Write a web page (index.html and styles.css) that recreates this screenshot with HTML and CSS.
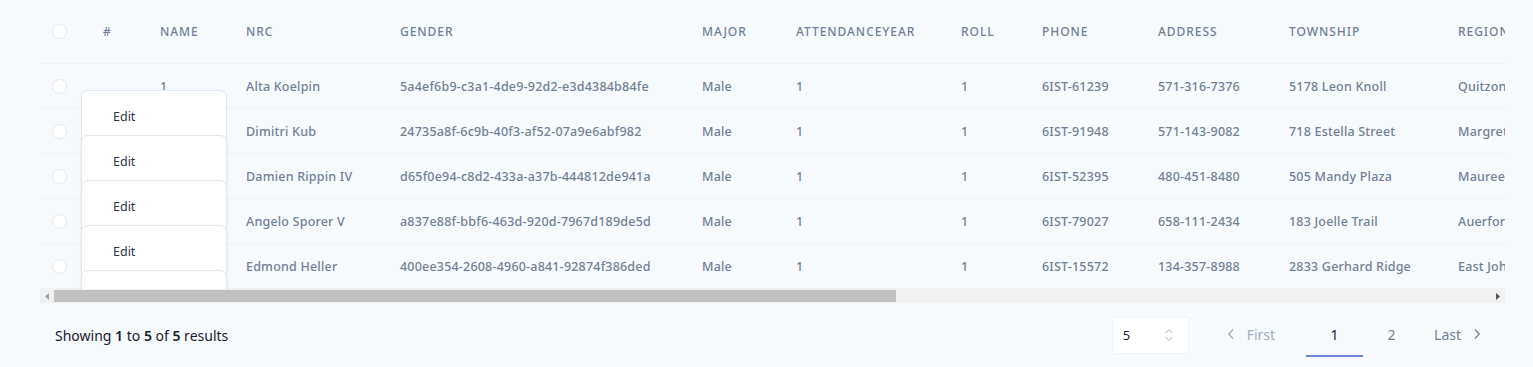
FILE: index.html
```html
<!DOCTYPE html>
<html lang="en">

<head>
    <meta charset="UTF-8">
    <meta name="viewport" content="width=device-width, initial-scale=1.0">
    <title>Students</title>
    <link rel="stylesheet" href="styles.css">
</head>

<body>
    <div class="table-wrap">
        <table class="grid">
            <colgroup>
                <col style="width:51px">
                <col style="width:57px">
                <col style="width:86px">
                <col style="width:154px">
                <col style="width:302px">
                <col style="width:94px">
                <col style="width:165px">
                <col style="width:81px">
                <col style="width:116px">
                <col style="width:131px">
                <col style="width:169px">
                <col style="width:190px">
                <col style="width:180px">
                <col style="width:180px">
                <col style="width:180px">
                <col style="width:180px">
                <col style="width:184px">
            </colgroup>
            <thead>
                <tr>
                    <th><span class="check"></span></th>
                    <th>#</th>
                    <th>Name</th>
                    <th>Nrc</th>
                    <th>Gender</th>
                    <th>Major</th>
                    <th>AttendanceYear</th>
                    <th>Roll</th>
                    <th>Phone</th>
                    <th>Address</th>
                    <th>Township</th>
                    <th>Region</th>
                    <th>Father</th>
                    <th>Mother</th>
                    <th>Email</th>
                    <th>Created</th>
                    <th></th>
                </tr>
            </thead>
            <tbody>
                <tr>
                    <td><span class="check"></span></td>
                    <td class="actions">
                        <div class="menu"><a>Edit</a><a>Delete</a></div>
                    </td>
                    <td>1</td>
                    <td>Alta Koelpin</td>
                    <td>5a4ef6b9-c3a1-4de9-92d2-e3d4384b84fe</td>
                    <td>Male</td>
                    <td>1</td>
                    <td>1</td>
                    <td>6IST-61239</td>
                    <td>571-316-7376</td>
                    <td>5178 Leon Knoll</td>
                    <td>Quitzon Mountains</td>
                    <td>Mr. Koelpin</td>
                    <td>Mrs. Koelpin</td>
                    <td>alta@example.com</td>
                    <td>2021-03-01</td>
                    <td></td>
                </tr>
                <tr>
                    <td><span class="check"></span></td>
                    <td class="actions">
                        <div class="menu"><a>Edit</a><a>Delete</a></div>
                    </td>
                    <td>2</td>
                    <td>Dimitri Kub</td>
                    <td>24735a8f-6c9b-40f3-af52-07a9e6abf982</td>
                    <td>Male</td>
                    <td>1</td>
                    <td>1</td>
                    <td>6IST-91948</td>
                    <td>571-143-9082</td>
                    <td>718 Estella Street</td>
                    <td>Margret Harbors</td>
                    <td>Mr. Kub</td>
                    <td>Mrs. Kub</td>
                    <td>dimitri@example.com</td>
                    <td>2021-03-01</td>
                    <td></td>
                </tr>
                <tr>
                    <td><span class="check"></span></td>
                    <td class="actions">
                        <div class="menu"><a>Edit</a><a>Delete</a></div>
                    </td>
                    <td>3</td>
                    <td>Damien Rippin IV</td>
                    <td>d65f0e94-c8d2-433a-a37b-444812de941a</td>
                    <td>Male</td>
                    <td>1</td>
                    <td>1</td>
                    <td>6IST-52395</td>
                    <td>480-451-8480</td>
                    <td>505 Mandy Plaza</td>
                    <td>Maureen Ville</td>
                    <td>Mr. Rippin</td>
                    <td>Mrs. Rippin</td>
                    <td>damien@example.com</td>
                    <td>2021-03-01</td>
                    <td></td>
                </tr>
                <tr>
                    <td><span class="check"></span></td>
                    <td class="actions">
                        <div class="menu"><a>Edit</a><a>Delete</a></div>
                    </td>
                    <td>4</td>
                    <td>Angelo Sporer V</td>
                    <td>a837e88f-bbf6-463d-920d-7967d189de5d</td>
                    <td>Male</td>
                    <td>1</td>
                    <td>1</td>
                    <td>6IST-79027</td>
                    <td>658-111-2434</td>
                    <td>183 Joelle Trail</td>
                    <td>Auerfort</td>
                    <td>Mr. Sporer</td>
                    <td>Mrs. Sporer</td>
                    <td>angelo@example.com</td>
                    <td>2021-03-01</td>
                    <td></td>
                </tr>
                <tr>
                    <td><span class="check"></span></td>
                    <td class="actions">
                        <div class="menu"><a>Edit</a><a>Delete</a></div>
                    </td>
                    <td>5</td>
                    <td>Edmond Heller</td>
                    <td>400ee354-2608-4960-a841-92874f386ded</td>
                    <td>Male</td>
                    <td>1</td>
                    <td>1</td>
                    <td>6IST-15572</td>
                    <td>134-357-8988</td>
                    <td>2833 Gerhard Ridge</td>
                    <td>East Johnston</td>
                    <td>Mr. Heller</td>
                    <td>Mrs. Heller</td>
                    <td>edmond@example.com</td>
                    <td>2021-03-01</td>
                    <td></td>
                </tr>
            </tbody>
        </table>
    </div>

    <!-- horizontal scrollbar, drawn by hand so it shows in every browser -->
    <div class="hscroll">
        <span class="hs-btn">
            <svg width="4" height="7" viewBox="0 0 4 7"><path d="M4 0 L0 3.5 L4 7 Z" fill="#a3a3a3" /></svg>
        </span>
        <div class="hs-track"><div class="hs-thumb"></div></div>
        <span class="hs-btn">
            <svg width="4" height="7" viewBox="0 0 4 7"><path d="M0 0 L4 3.5 L0 7 Z" fill="#505050" /></svg>
        </span>
    </div>

    <footer class="pager">
        <p class="summary">Showing <b>1</b> to <b>5</b> of <b>5</b> results</p>
        <div class="pager-right">
            <div class="per-page">
                <span>5</span>
                <svg width="10" height="14" viewBox="0 0 10 14">
                    <path d="M1.5 5 L5 1.5 L8.5 5" fill="none" stroke="#cbd5e0" stroke-width="1.2" />
                    <path d="M1.5 9 L5 12.5 L8.5 9" fill="none" stroke="#cbd5e0" stroke-width="1.2" />
                </svg>
            </div>
            <nav class="pages">
                <a class="page first muted">
                    <svg width="8" height="12" viewBox="0 0 8 12">
                        <path d="M6 1.5 L1.8 6 L6 10.5" fill="none" stroke="currentColor" stroke-width="1.3" />
                    </svg>
                    First
                </a>
                <a class="page current">1</a>
                <a class="page">2</a>
                <a class="page last">
                    Last
                    <svg width="8" height="12" viewBox="0 0 8 12">
                        <path d="M2 1.5 L6.2 6 L2 10.5" fill="none" stroke="currentColor" stroke-width="1.3" />
                    </svg>
                </a>
            </nav>
        </div>
    </footer>
</body>

</html>
```

FILE: styles.css
```css
html,
body {
    margin: 0;
}

body {
    background: #f7fafc;
    font-family: "Noto Sans", "Open Sans", sans-serif;
    color: #718096;
}

.table-wrap {
    margin-left: 40px;
    width: 1465px;
    overflow: hidden;
}

.grid {
    width: 2500px;
    table-layout: fixed;
    border-collapse: collapse;
}

.grid th,
.grid td {
    padding: 0 12px;
    text-align: left;
    white-space: nowrap;
    overflow: visible;
}

.grid th {
    height: 63px;
    font-size: 12px;
    font-weight: 500;
    letter-spacing: 0.08em;
    text-transform: uppercase;
    color: #718096;
    border-bottom: 1px solid #edf2f7;
}

.grid td {
    height: 44px;
    font-size: 12.5px;
    font-weight: 500;
    letter-spacing: 0.2px;
    border-bottom: 1px solid #edf2f7;
}

.check {
    display: block;
    width: 15px;
    height: 15px;
    border-radius: 50%;
    background: #fff;
    border: 1px solid #e2e8f0;
    box-sizing: border-box;
}

.actions {
    position: relative;
}

.menu {
    position: absolute;
    top: 26px;
    left: -10px;
    width: 144px;
    background: #fff;
    border: 1px solid #e2e8f0;
    border-radius: 7px;
    box-shadow: 0 1px 3px rgba(0, 0, 0, 0.05);
    padding: 17px 0;
    z-index: 1;
}

.menu a {
    display: block;
    padding: 0 31px;
    line-height: 18px;
    height: 30px;
    font-size: 12.5px;
    font-weight: 400;
    letter-spacing: 0;
    color: #2d3748;
}

.hscroll {
    display: flex;
    margin-left: 40px;
    width: 1465px;
    height: 14px;
    background: #f1f1f1;
}

.hs-btn {
    display: flex;
    align-items: center;
    justify-content: center;
    width: 14px;
    flex: none;
}

.hs-track {
    flex: 1;
    display: flex;
    align-items: center;
}

.hs-thumb {
    width: 842px;
    height: 12px;
    background: #c1c1c1;
}

.pager {
    display: flex;
    justify-content: space-between;
    align-items: center;
    padding: 10px 38px 0 55px;
}

.summary {
    margin: 0;
    font-size: 14px;
    color: #1a202c;
}

.summary b {
    font-weight: 600;
}

.pager-right {
    display: flex;
    align-items: center;
}

.per-page {
    display: flex;
    align-items: center;
    justify-content: space-between;
    box-sizing: border-box;
    width: 77px;
    height: 37px;
    padding: 0 14px 0 10px;
    background: #fff;
    border: 1px solid #f1f4f8;
    font-size: 13px;
    color: #1a202c;
    margin-right: 24px;
}

.pages {
    display: flex;
}

.page {
    display: flex;
    align-items: center;
    justify-content: center;
    gap: 12px;
    width: 57px;
    height: 44px;
    box-sizing: border-box;
    border-bottom: 2px solid transparent;
    font-size: 14px;
    color: #718096;
}

.page.first {
    width: auto;
    padding: 0 31px 0 14px;
}

.page.last {
    width: auto;
    padding: 0 14px;
}

.page.muted {
    color: #a0aec0;
}

.page.current {
    color: #1a202c;
    border-bottom-color: #6a86d8;
}
```
